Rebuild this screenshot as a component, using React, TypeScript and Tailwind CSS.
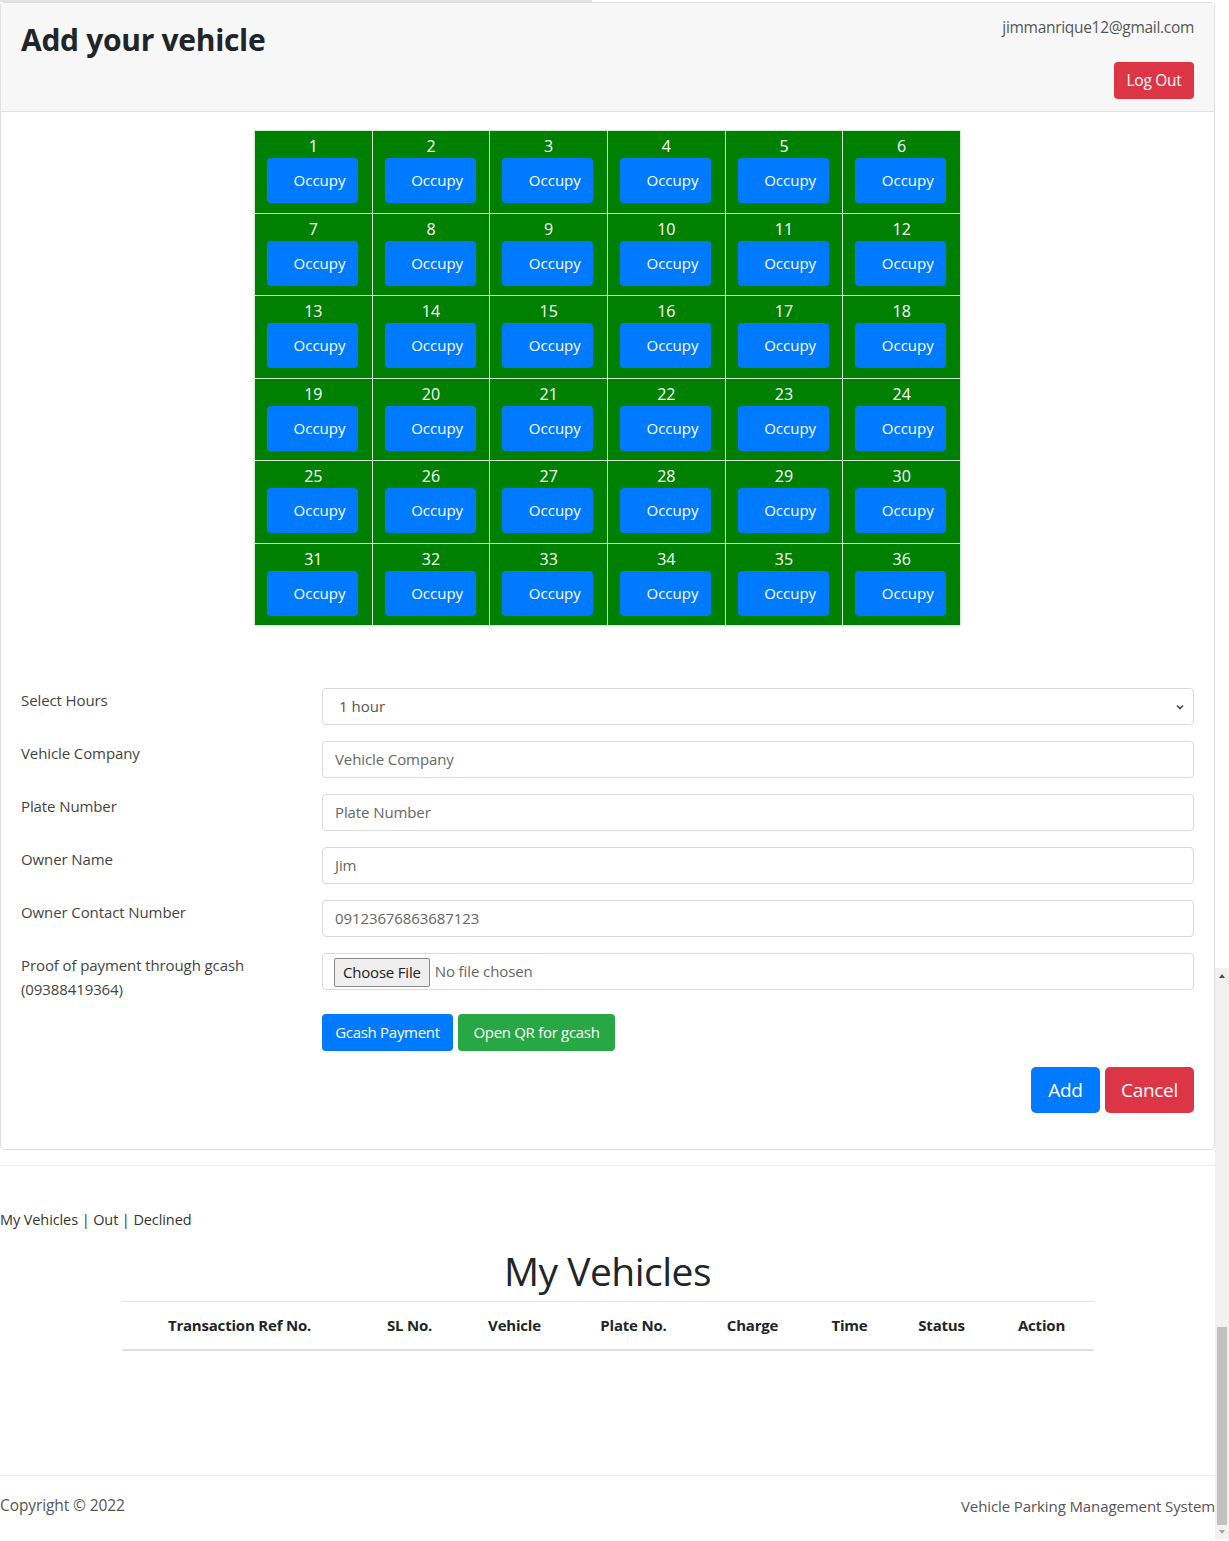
import React from "react";

const SLOTS = Array.from({ length: 36 }, (_, i) => i + 1);

const FIELDS = [
  { label: "Vehicle Company", value: "", placeholder: "Vehicle Company" },
  { label: "Plate Number", value: "", placeholder: "Plate Number" },
  { label: "Owner Name", value: "Jim", placeholder: "" },
  { label: "Owner Contact Number", value: "09123676863687123", placeholder: "" },
];

const COLUMNS = [
  { label: "Transaction Ref No.", w: "w-[236px]" },
  { label: "SL No.", w: "w-[104px]" },
  { label: "Vehicle", w: "w-[106px]" },
  { label: "Plate No.", w: "w-[132px]" },
  { label: "Charge", w: "w-[106px]" },
  { label: "Time", w: "w-[88px]" },
  { label: "Status", w: "w-[96px]" },
  { label: "Action", w: "w-[104px]" },
];

function SlotGrid() {
  const rows = [0, 1, 2, 3, 4, 5].map((r) => SLOTS.slice(r * 6, r * 6 + 6));
  return (
    <table className="ml-[233px] w-[707px] table-fixed border-collapse border border-[#d4ecd4] bg-[#008000]">
      <tbody>
        {rows.map((row, ri) => (
          <tr key={ri}>
            {row.map((n) => (
              <td
                key={n}
                className="h-[82.5px] border border-[#d4ecd4] align-top pt-[4px]"
              >
                <div className="text-center text-white text-[16px] leading-[22px]">{n}</div>
                <button className="mt-[1px] ml-[12px] w-[91px] h-[45px] rounded-[4px] bg-[#007bff] text-white text-[15px] pl-[14px]">
                  Occupy
                </button>
              </td>
            ))}
          </tr>
        ))}
      </tbody>
    </table>
  );
}

function Scrollbar() {
  return (
    <div className="w-[14px] flex flex-col">
      <div className="h-[968px] bg-white" />
      <div className="flex-1 bg-[#f1f1f1] flex flex-col items-center">
        <div className="h-[16px] flex items-center justify-center">
          <div className="w-0 h-0 border-l-[3px] border-r-[3px] border-b-[4px] border-l-transparent border-r-transparent border-b-[#505050]" />
        </div>
        <div className="h-[343px]" />
        <div className="w-[10px] h-[198px] bg-[#c1c1c1]" />
        <div className="flex-1 flex items-center justify-center">
          <div className="w-0 h-0 border-l-[3px] border-r-[3px] border-t-[4px] border-l-transparent border-r-transparent border-t-[#a3a3a3]" />
        </div>
      </div>
    </div>
  );
}

export default function App() {
  return (
    <div
      className="flex w-[1229px] bg-white text-[#212529]"
      style={{ fontFamily: '"Open Sans", "Noto Sans", sans-serif' }}
    >
      <div className="w-[1215px] flex flex-col">
        {/* thin progress strip */}
        <div className="h-[2px] flex">
          <div className="w-[592px] bg-[#e3e3e3]" />
        </div>

        {/* Card */}
        <div className="border border-[#dfdfdf] rounded-[4px] h-[1148px] flex flex-col">
          <div className="h-[109px] bg-[#f7f7f7] border-b border-[#e2e2e2] flex justify-between px-[20px]">
            <h1 className="text-[30px] font-bold tracking-[-0.3px] leading-none mt-[22px] text-[#212529]">
              Add your vehicle
            </h1>
            <div className="flex flex-col items-end pt-[13px]">
              <span className="text-[15.5px] text-[#555] tracking-[-0.3px]">jimmanrique12@gmail.com</span>
              <button className="mt-[23px] w-[80px] h-[37px] rounded-[4px] bg-[#dc3545] text-white text-[15.5px] tracking-[-0.3px]">
                Log Out
              </button>
            </div>
          </div>

          <div className="flex-1 px-[20px] pt-[18px]">
            <SlotGrid />

            <div className="mt-[62px] flex flex-col gap-[16px] text-[15px]">
              <div className="flex">
                <label className="w-[301px] pt-[1px] text-[#444] tracking-[-0.1px]">Select Hours</label>
                <div className="flex-1 h-[37px] border border-[#d9d9d9] rounded-[4px] flex items-center justify-between pl-[16px] pr-[8px] text-[#555]">
                  <span>1 hour</span>
                  <svg width="10" height="10" viewBox="0 0 10 10">
                    <path d="M2 3.5 L5 6.5 L8 3.5" stroke="#444" strokeWidth="1.6" fill="none" />
                  </svg>
                </div>
              </div>

              {FIELDS.map((f) => (
                <div key={f.label} className="flex">
                  <label className="w-[301px] pt-[1px] text-[#444] tracking-[-0.1px]">{f.label}</label>
                  <div className="flex-1 h-[37px] border border-[#d9d9d9] rounded-[4px] flex items-center pl-[12px] text-[#666] tracking-[-0.1px]">
                    {f.value || f.placeholder}
                  </div>
                </div>
              ))}

              <div className="flex">
                <label className="w-[301px] leading-[24px] text-[#444] tracking-[-0.1px]">
                  Proof of payment through gcash
                  <br />
                  (09388419364)
                </label>
                <div className="flex-1 h-[37px] border border-[#d9d9d9] rounded-[4px] flex items-center pl-[11px] text-[#666]">
                  <span className="h-[29px] px-[8px] mt-[2px] flex items-center border border-[#8a8a8a] rounded-[2px] bg-[#efefef] text-[#222] tracking-[-0.2px]">
                    Choose File
                  </span>
                  <span className="ml-[5px] tracking-[-0.1px]">No file chosen</span>
                </div>
              </div>

              <div className="flex ml-[301px] gap-[5px] -mt-[3px]">
                <button className="w-[131px] h-[37px] rounded-[4px] bg-[#007bff] text-white tracking-[-0.3px]">
                  Gcash Payment
                </button>
                <button className="w-[157px] h-[37px] rounded-[4px] bg-[#28a745] text-white tracking-[-0.3px]">
                  Open QR for gcash
                </button>
              </div>
            </div>

            <div className="flex justify-end gap-[5px] mt-[16px]">
              <button className="w-[69px] h-[46px] rounded-[5px] bg-[#007bff] text-white text-[19px] tracking-[-0.3px]">
                Add
              </button>
              <button className="w-[89px] h-[46px] rounded-[5px] bg-[#dc3545] text-white text-[19px] tracking-[-0.3px]">
                Cancel
              </button>
            </div>
          </div>
        </div>

        <div className="mt-[15px] h-px bg-[#ececec]" />

        <div className="mt-[42px] text-[14.5px] text-[#333] tracking-[-0.1px] leading-[24px]">
          My Vehicles | Out | Declined
        </div>

        <h2 className="mt-[13px] text-center text-[39px] font-medium leading-[52px] text-[#212529] tracking-[-0.5px]">
          My Vehicles
        </h2>

        <div className="mt-[4px] mx-auto w-[972px] border-t border-[#e2e2e2] border-b-2 border-b-[#dedede] flex h-[50px] items-center">
          {COLUMNS.map((c) => (
            <div key={c.label} className={`${c.w} text-center text-[15px] font-bold text-[#212529] tracking-[-0.2px]`}>
              {c.label}
            </div>
          ))}
        </div>

        <div className="mt-[124px] h-px bg-[#ececec]" />
        <div className="h-[63px] flex justify-between items-center pb-[3px] text-[#555] tracking-[-0.1px]">
          <span className="text-[15.5px]">Copyright © 2022</span>
          <span className="text-[15px]">Vehicle Parking Management System</span>
        </div>
      </div>
      <Scrollbar />
    </div>
  );
}
